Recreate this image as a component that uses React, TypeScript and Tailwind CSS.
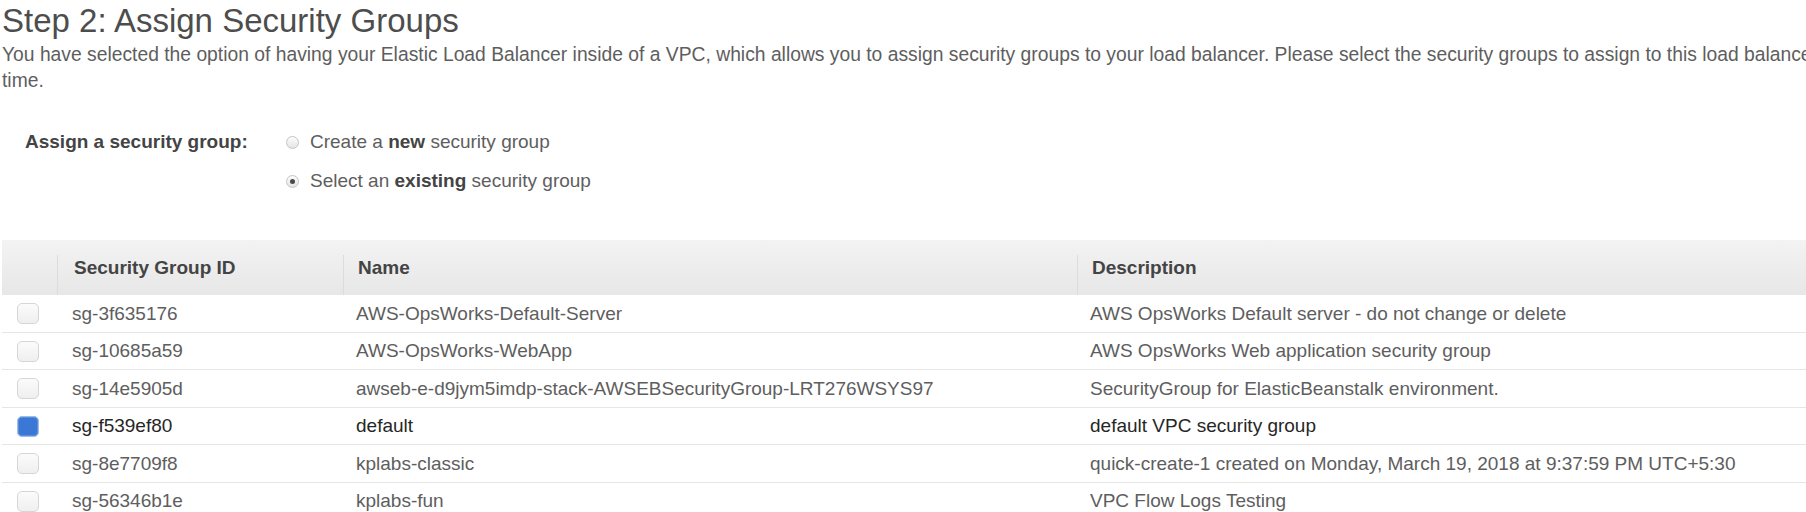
import { useState } from "react";

type SecurityGroup = {
  id: string;
  name: string;
  description: string;
};

const groups: SecurityGroup[] = [
  {
    id: "sg-3f635176",
    name: "AWS-OpsWorks-Default-Server",
    description: "AWS OpsWorks Default server - do not change or delete",
  },
  {
    id: "sg-10685a59",
    name: "AWS-OpsWorks-WebApp",
    description: "AWS OpsWorks Web application security group",
  },
  {
    id: "sg-14e5905d",
    name: "awseb-e-d9jym5imdp-stack-AWSEBSecurityGroup-LRT276WSYS97",
    description: "SecurityGroup for ElasticBeanstalk environment.",
  },
  {
    id: "sg-f539ef80",
    name: "default",
    description: "default VPC security group",
  },
  {
    id: "sg-8e7709f8",
    name: "kplabs-classic",
    description:
      "quick-create-1 created on Monday, March 19, 2018 at 9:37:59 PM UTC+5:30",
  },
  {
    id: "sg-56346b1e",
    name: "kplabs-fun",
    description: "VPC Flow Logs Testing",
  },
];

const Radio = ({ checked }: { checked: boolean }) => (
  <span className="flex h-[13px] w-[13px] items-center justify-center rounded-full border border-[#c4c4c4] bg-gradient-to-b from-[#fdfdfd] to-[#e4e4e4]">
    {checked && <span className="h-[5px] w-[5px] rounded-full bg-[#4a4a4a]" />}
  </span>
);

const Checkbox = ({ checked }: { checked: boolean }) =>
  checked ? (
    <span className="block h-[21px] w-[22px] rounded-[5px] border border-[#9dbcea] bg-[#3b78d6] shadow-[inset_0_0_0_1px_#5a8fe0]" />
  ) : (
    <span className="block h-[21px] w-[22px] rounded-[5px] border border-[#d6d6d6] bg-gradient-to-b from-[#fbfbfb] to-[#efefef]" />
  );

const App = () => {
  const [mode, setMode] = useState("existing");
  const [selected, setSelected] = useState("sg-f539ef80");

  return (
    <div
      className="h-[512px] w-[1806px] overflow-hidden bg-white"
      style={{ fontFamily: '"Liberation Sans", Arial, sans-serif' }}
    >
      {/* wider than the window on purpose: the long line runs off the right edge */}
      <div className="w-[2080px] pl-[2px] pt-[3px]">
        <h2 className="text-[33px] leading-[36px] text-[#4d4d4d]">
          Step 2: Assign Security Groups
        </h2>
        <p className="mt-[3px] text-[19.3px] leading-[26px] text-[#5e5e5e]">
          You have selected the option of having your Elastic Load Balancer
          inside of a VPC, which allows you to assign security groups to your
          load balancer. Please select the security groups to assign to this
          load balancer. This can be changed at any time.
        </p>
      </div>

      <div className="mt-[35px] flex text-[19px] leading-[26px]">
        <div className="w-[286px] pl-[25px] font-bold text-[#444]">
          Assign a security group:
        </div>
        <div className="flex flex-col gap-[13px] text-[#5e5e5e]">
          <label
            className="flex items-center gap-[11px]"
            onClick={() => setMode("new")}
          >
            <Radio checked={mode === "new"} />
            <span>
              Create a <b className="text-[#444]">new</b> security group
            </span>
          </label>
          <label
            className="flex items-center gap-[11px]"
            onClick={() => setMode("existing")}
          >
            <Radio checked={mode === "existing"} />
            <span>
              Select an <b className="text-[#444]">existing</b> security group
            </span>
          </label>
        </div>
      </div>

      <div className="ml-[2px] mt-[46px] text-[19px]">
        <div className="flex h-[55px] items-end bg-gradient-to-b from-[#f3f3f3] to-[#e7e7e7] font-bold text-[#444]">
          <div className="w-[55px]" />
          <div className="flex h-[40px] w-[286px] items-center border-l border-[#dcdcdc] pb-[13px] pl-[16px]">
            Security Group ID
          </div>
          <div className="flex h-[40px] w-[734px] items-center border-l border-[#dcdcdc] pb-[13px] pl-[14px]">
            Name
          </div>
          <div className="flex h-[40px] flex-1 items-center border-l border-[#dcdcdc] pb-[13px] pl-[14px]">
            Description
          </div>
        </div>
        {groups.map((g) => {
          const isSel = g.id === selected;
          return (
            <div
              key={g.id}
              onClick={() => setSelected(g.id)}
              className={`flex h-[37.5px] items-center border-b border-[#e6e6e6] pt-[1px] ${
                isSel ? "text-[#262626]" : "text-[#5e5e5e]"
              }`}
            >
              <div className="flex w-[55px] justify-center pr-[4px]">
                <Checkbox checked={isSel} />
              </div>
              <div className="w-[286px] pl-[15px]">{g.id}</div>
              <div className="w-[734px] pl-[13px]">{g.name}</div>
              <div className="flex-1 pl-[13px]">{g.description}</div>
            </div>
          );
        })}
      </div>
    </div>
  );
};

export default App;
